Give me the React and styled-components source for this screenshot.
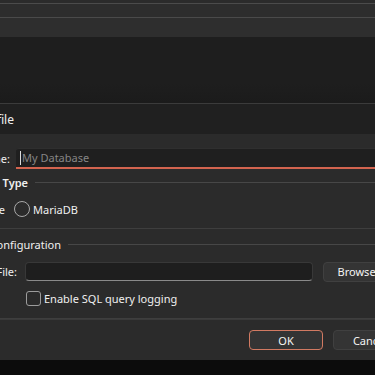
import React from 'react';
import styled, { createGlobalStyle } from 'styled-components';

const GlobalStyle = createGlobalStyle`
  html, body {
    margin: 0;
    padding: 0;
    background: #1e1e1e;
    overflow: hidden;
  }
  body {
    font-family: "Noto Sans", "Open Sans", sans-serif;
    font-size: 11px;
    color: #e6e6e6;
  }
`;

const Screen = styled.div`
  width: 375px;
  height: 375px;
  overflow: hidden;
  display: flex;
  flex-direction: column;
`;

const Strip = styled.div`
  height: ${(p) => p.h}px;
  background: ${(p) => p.bg};
  border-bottom: ${(p) => (p.line ? `1px solid ${p.line}` : 'none')};
  flex-shrink: 0;
`;

const Backdrop = styled.div`
  height: 66px;
  flex-shrink: 0;
  background: linear-gradient(#1e1e1e 70%, #1b1b1b);
`;

const Dialog = styled.div`
  width: 560px;
  margin-left: -120px;
  display: flex;
  flex-direction: column;
  flex-shrink: 0;
  border-top: 1px solid #3b3b3b;
`;

const TitleBar = styled.div`
  height: 30px;
  background: #202020;
  display: flex;
  align-items: center;
`;

const RightBox = styled.div`
  width: ${(p) => p.w}px;
  flex-shrink: 0;
  display: flex;
  justify-content: flex-end;
  align-items: center;
  white-space: nowrap;
  font-size: ${(p) => p.size || 11}px;
  font-weight: ${(p) => p.weight || 400};
  color: #f0f0f0;
`;

const Content = styled.div`
  background: #2b2b2b;
  padding-top: 14px;
  display: flex;
  flex-direction: column;
`;

const Row = styled.div`
  height: ${(p) => p.h}px;
  margin-top: ${(p) => p.mt || 0}px;
  display: flex;
  align-items: center;
  gap: ${(p) => p.gap || 0}px;
`;

const NameInput = styled.div`
  flex: 1;
  height: 18px;
  background: #1f1f1f;
  border-top: 1px solid #2f2f2f;
  border-bottom: 2px solid #d3644f;
  border-radius: 3px 3px 0 0;
  display: flex;
  align-items: center;
  padding-left: 4px;
  color: #868686;
  font-size: 11px;
`;

const Caret = styled.span`
  width: 1px;
  height: 14px;
  background: #dcdcdc;
  margin-right: 1px;
`;

const HeaderLine = styled.div`
  flex: 1;
  height: 1px;
  background: #474747;
`;

const Radio = styled.span`
  width: 14px;
  height: 14px;
  border: 1px solid #a8a8a8;
  border-radius: 50%;
  box-sizing: content-box;
  flex-shrink: 0;
`;

const Option = styled.div`
  display: flex;
  align-items: center;
  gap: 3px;
  color: #f0f0f0;
`;

const Separator = styled.div`
  height: 1px;
  background: #3e3e3e;
  margin-top: ${(p) => p.mt || 0}px;
`;

const FileInput = styled.div`
  width: 286px;
  height: 17px;
  background: #1e1e1e;
  border: 1px solid #383838;
  border-bottom-color: #8a8a8a;
  border-radius: 4px;
`;

const Button = styled.button`
  width: ${(p) => p.w}px;
  height: 20px;
  padding: 0;
  background: #343434;
  border: 1px solid ${(p) => (p.primary ? '#d27a62' : '#404040')};
  border-radius: 4px;
  color: #f4f4f4;
  font-family: inherit;
  font-size: 11px;
  flex-shrink: 0;
`;

const CheckRow = styled.div`
  display: flex;
  align-items: center;
  gap: 3px;
  padding-left: 146px;
  margin-top: 10px;
  height: 15px;
  color: #f0f0f0;
`;

const Box = styled.span`
  width: 13px;
  height: 13px;
  border: 1px solid #9c9c9c;
  border-radius: 3px;
  flex-shrink: 0;
`;

const Footer = styled.div`
  height: 40px;
  background: #2b2b2b;
  border-top: 1px solid #3a3a3a;
  display: flex;
  align-items: center;
  gap: 10px;
  padding-left: 369px;
`;

const Bottom = styled.div`
  flex: 1;
  background: #0c0c0c;
`;

export default function App() {
  return (
    <Screen>
      <GlobalStyle />
      <Strip h={3} bg="#2b2b2b" line="#4b4b4b" />
      <Strip h={13} bg="#2d2d2d" line="#4a4a4a" />
      <Strip h={19} bg="#2e2e2e" />
      <Backdrop />
      <Dialog>
        <TitleBar>
          <RightBox w={134} size={12}>Connection Profile</RightBox>
        </TitleBar>
        <Content>
          <Row h={20} gap={6}>
            <RightBox w={130}>Name:</RightBox>
            <NameInput>
              <Caret />
              My Database
            </NameInput>
          </Row>
          <Row h={14} mt={7} gap={7}>
            <RightBox w={148} weight={600}>Database Type</RightBox>
            <HeaderLine />
          </Row>
          <Row h={16} mt={12} gap={9}>
            <RightBox w={125}>
              <Option>
                <Radio />
                SQLite
              </Option>
            </RightBox>
            <Option>
              <Radio />
              MariaDB
            </Option>
          </Row>
          <Separator mt={11} />
          <Row h={14} mt={8} gap={7}>
            <RightBox w={181}>Log Configuration</RightBox>
            <HeaderLine />
          </Row>
          <Row h={19} mt={11} gap={8}>
            <RightBox w={137}>Log File:</RightBox>
            <FileInput />
            <Button w={76} style={{ marginLeft: 2 }}>Browse...</Button>
          </Row>
          <CheckRow>
            <Box />
            Enable SQL query logging
          </CheckRow>
          <Separator mt={12} />
        </Content>
        <Footer>
          <Button w={74} primary>OK</Button>
          <Button w={74}>Cancel</Button>
        </Footer>
      </Dialog>
      <Bottom />
    </Screen>
  );
}
